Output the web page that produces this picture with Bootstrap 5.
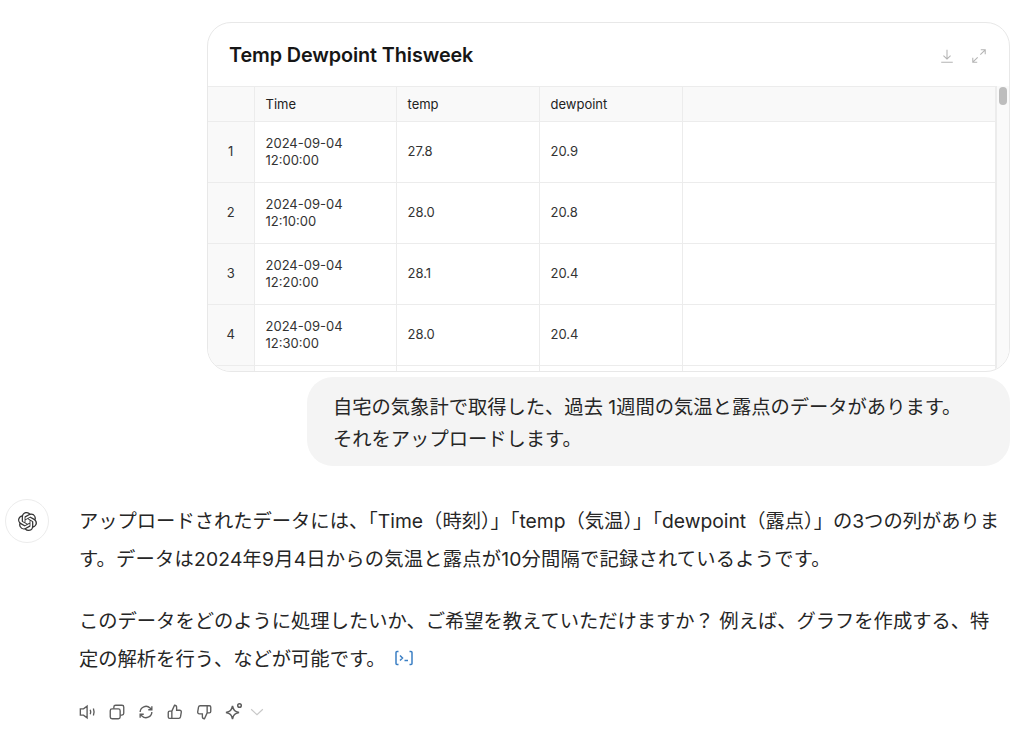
<!DOCTYPE html>
<html lang="ja">

<head>
  <meta charset="UTF-8" />
  <meta name="viewport" content="width=device-width, initial-scale=1.0" />
  <title>Temp Dewpoint Thisweek</title>
  <link href="https://cdn.jsdelivr.net/npm/bootstrap@5.3.3/dist/css/bootstrap.min.css" rel="stylesheet" />
  <style>
    html, body { height: 100%; overflow: hidden; }
    body { font-family: Inter, "Noto Sans CJK JP", sans-serif; color: #0d0d0d; background: #fff; }
    .chat-page { padding: 22px 14px 0 5px; }
    .file-card { width: 803px; height: 350px; border: 1px solid #e8e8e8; border-radius: 24px; overflow: hidden; }
    .file-head { height: 63px; padding: 2px 22px 0 21px; }
    .file-head h1 { font-size: 19.800px; font-weight: 600; color: #161616; margin: 0; letter-spacing: -.1px; }
    .file-head svg { width: 16px; height: 16px; }
    .table-wrap { height: 286px; overflow: hidden; }
    .data-table { width: 789px; table-layout: fixed; border-collapse: collapse; font-size: 13px; line-height: 17px; color: #333; }
    .data-table th, .data-table td { border: 1px solid #ececec; padding: 0 11px; font-weight: 400; vertical-align: middle; }
    .data-table tr > :first-child { border-left: 0; }
    .data-table thead th { height: 35px; background: #f9f9f9; color: #222; }
    .data-table tbody td { height: 61px; }
    .data-table tbody td:not(:nth-child(2)) { padding-bottom: 2px; }
    .data-table tbody td.row-no { background: #f9f9f9; text-align: center; padding: 0 0 2px; }
    .scroll-rail { width: 13px; background: #fafafa; border-left: 1px solid #ececec; }
    .scroll-thumb { width: 8px; height: 18px; margin: 1px 0 0 2px; background: #bdbdbd; border-radius: 4px; }
    .user-bubble { width: 703px; height: 89px; margin-top: 5px; padding: 14px 26px; background: #f4f4f4; border-radius: 26px; font-size: 19.300px; line-height: 32px; color: #262626; white-space: nowrap; }
    .reply-row { margin-top: 33px; }
    .bot-avatar { width: 44px; height: 44px; border: 1px solid #ececec; border-radius: 50%; flex: none; }
    .reply-body { width: 925px; margin-left: 30px; font-size: 19.300px; line-height: 38px; color: #262626; margin-top: 3px; white-space: nowrap; }
    .reply-body p { margin: 0 0 24px; }
    .wide-run { letter-spacing: .2px; }
    .code-link { vertical-align: -1px; margin-left: 8px; }
    .reply-tools { margin-top: 2px; gap: 11px; color: #5d5d5d; }
    .reply-tools svg { width: 18px; height: 18px; display: block; }
    .reply-tools .sparkle-icon { width: 20px; height: 20px; }
  </style>
</head>

<body>
  <div class="chat-page d-flex flex-column">
    <div class="d-flex flex-column align-items-end">
      <div class="file-card bg-white">
        <div class="file-head d-flex align-items-center justify-content-between">
          <h1>Temp Dewpoint Thisweek</h1>
          <div class="d-flex gap-3">
            <svg viewBox="0 0 18 18" fill="none" stroke="#b4b4b4" stroke-width="1.2"><path d="M9 2v10M5 8.500 9 12.500l4-4M2.500 16h13"/></svg>
            <svg viewBox="0 0 18 18" fill="none" stroke="#b4b4b4" stroke-width="1.2"><path d="M10.500 7.500 16 2M11 2h5v5M7.500 10.500 2 16M2 11v5h5"/></svg>
          </div>
        </div>
        <div class="table-wrap d-flex">
          <table class="data-table">
            <colgroup><col style="width:46px"><col style="width:142px"><col style="width:143px"><col style="width:143px"><col></colgroup>
            <thead>
              <tr><th></th><th>Time</th><th>temp</th><th>dewpoint</th><th></th></tr>
            </thead>
            <tbody>
              <tr><td class="row-no">1</td><td>2024-09-04<br>12:00:00</td><td>27.8</td><td>20.9</td><td></td></tr>
              <tr><td class="row-no">2</td><td>2024-09-04<br>12:10:00</td><td>28.0</td><td>20.8</td><td></td></tr>
              <tr><td class="row-no">3</td><td>2024-09-04<br>12:20:00</td><td>28.1</td><td>20.4</td><td></td></tr>
              <tr><td class="row-no">4</td><td>2024-09-04<br>12:30:00</td><td>28.0</td><td>20.4</td><td></td></tr>
              <tr><td class="row-no"></td><td></td><td></td><td></td><td></td></tr>
            </tbody>
          </table>
          <div class="scroll-rail"><div class="scroll-thumb"></div></div>
        </div>
      </div>
      <div class="user-bubble">自宅の気象計で取得した、過去 1週間の気温と露点のデータがあります。<br>それをアップロードします。</div>
    </div>

    <div class="reply-row d-flex align-items-start">
      <div class="bot-avatar d-flex align-items-center justify-content-center">
        <svg width="19" height="19" viewBox="0 0 24 24" fill="#333"><path d="M22.2819 9.8211a5.9847 5.9847 0 0 0-.5157-4.9108 6.0462 6.0462 0 0 0-6.5098-2.9A6.0651 6.0651 0 0 0 4.9807 4.1818a5.9847 5.9847 0 0 0-3.9977 2.9 6.0462 6.0462 0 0 0 .7427 7.0966 5.98 5.98 0 0 0 .511 4.9107 6.051 6.051 0 0 0 6.5146 2.9001A5.9847 5.9847 0 0 0 13.2599 24a6.0557 6.0557 0 0 0 5.7718-4.2058 5.9894 5.9894 0 0 0 3.9977-2.9001 6.0557 6.0557 0 0 0-.7475-7.0729zm-9.022 12.6081a4.4755 4.4755 0 0 1-2.8764-1.0408l.1419-.0804 4.7783-2.7582a.7948.7948 0 0 0 .3927-.6813v-6.7369l2.02 1.1686a.071.071 0 0 1 .038.052v5.5826a4.504 4.504 0 0 1-4.4945 4.4944zm-9.6607-4.1254a4.4708 4.4708 0 0 1-.5346-3.0137l.142.0852 4.783 2.7582a.7712.7712 0 0 0 .7806 0l5.8428-3.3685v2.3324a.0804.0804 0 0 1-.0332.0615L9.74 19.9502a4.4992 4.4992 0 0 1-6.1408-1.6464zM2.3408 7.8956a4.485 4.485 0 0 1 2.3655-1.9728V11.6a.7664.7664 0 0 0 .3879.6765l5.8144 3.3543-2.0201 1.1685a.0757.0757 0 0 1-.071 0l-4.8303-2.7865A4.504 4.504 0 0 1 2.3408 7.872zm16.5963 3.8558L13.1038 8.364 15.1192 7.2a.0757.0757 0 0 1 .071 0l4.8303 2.7913a4.4944 4.4944 0 0 1-.6765 8.1042v-5.6772a.79.79 0 0 0-.407-.667zm2.0107-3.0231l-.142-.0852-4.7735-2.7818a.7759.7759 0 0 0-.7854 0L9.409 9.2297V6.8974a.0662.0662 0 0 1 .0284-.0615l4.8303-2.7866a4.4992 4.4992 0 0 1 6.6802 4.66zM8.3065 12.863l-2.02-1.1638a.0804.0804 0 0 1-.038-.0567V6.0742a4.4992 4.4992 0 0 1 7.3757-3.4537l-.142.0805L8.704 5.459a.7948.7948 0 0 0-.3927.6813zm1.0976-2.3654l2.602-1.4998 2.6069 1.4998v2.9994l-2.5974 1.4997-2.6067-1.4997Z"/></svg>
      </div>
      <div class="reply-body">
        <p>アップロードされたデータには、「Time（時刻）」「temp（気温）」「dewpoint（露点）」の3つの列がありま<br><span class="wide-run">す。データは2024年9月4日からの気温と露点が10分間隔で記録されているようです。</span></p>
        <p>このデータをどのように処理したいか、ご希望を教えていただけますか？ 例えば、グラフを作成する、特<br>定の解析を行う、などが可能です。<svg class="code-link" width="20" height="18" viewBox="0 0 20 18" fill="none" stroke="#3b7fc4" stroke-width="1.500"><path d="M4.500 2.500H3a1 1 0 0 0-1 1v11a1 1 0 0 0 1 1h1.500M15.500 2.500H17a1 1 0 0 1 1 1v11a1 1 0 0 1-1 1h-1.500M6 6.500 8.500 9 6 11.500M10.500 11.500H14"/></svg></p>
        <div class="reply-tools d-flex align-items-center">
          <svg viewBox="0 0 20 20" fill="none" stroke="currentColor" stroke-width="1.500"><path d="M1.500 6.500h3.500l4-3v13l-4-3H1.500zM12.500 7.500c.7 1.600.7 3.400 0 5M16 6c1 2.600 1 5.400 0 8"/></svg>
          <svg viewBox="0 0 20 20" fill="none" stroke="currentColor" stroke-width="1.500"><rect x="2.500" y="6.500" width="11" height="11" rx="2"/><path d="M6.500 6.500V4.500a2 2 0 0 1 2-2h7a2 2 0 0 1 2 2v7a2 2 0 0 1-2 2h-2"/></svg>
          <svg viewBox="0 0 20 20" fill="none" stroke="currentColor" stroke-width="1.500"><path d="M3.500 10a6.500 6.500 0 0 1 11-4.500l2 2M16.500 3.500v4h-4M16.500 10a6.500 6.500 0 0 1-11 4.500l-2-2M3.500 16.500v-4h4"/></svg>
          <svg viewBox="0 0 20 20" fill="none" stroke="currentColor" stroke-width="1.500"><path d="M6.500 9v8H4a1.500 1.500 0 0 1-1.500-1.500v-5A1.500 1.500 0 0 1 4 9zM6.500 9l3-6.500c1.400 0 2.300 1 2.300 2.300V8h3.400c1.100 0 2 1 1.800 2.100l-.9 5.400c-.2 .9-.9 1.500-1.800 1.500H6.500"/></svg>
          <svg viewBox="0 0 20 20" fill="none" stroke="currentColor" stroke-width="1.500"><path d="M13.500 11V3H16a1.500 1.500 0 0 1 1.500 1.500v5A1.500 1.500 0 0 1 16 11zM13.500 11l-3 6.500c-1.400 0-2.300-1-2.300-2.300V12H4.800C3.700 12 2.800 11 3 9.900l.9-5.400C4.100 3.600 4.800 3 5.700 3h7.800"/></svg>
          <div class="d-flex align-items-center gap-1">
            <svg class="sparkle-icon" viewBox="0 0 20 20" fill="none" stroke="currentColor" stroke-width="1.500"><path d="M8.500 4c.9 4.200 2.300 5.600 6.500 6.500-4.200.9-5.600 2.300-6.500 6.500-.9-4.200-2.300-5.600-6.500-6.500C6.200 9.600 7.600 8.200 8.500 4z"/><circle cx="15.500" cy="3.500" r="1.800"/></svg>
            <svg viewBox="0 0 20 20" fill="none" stroke="#c8c8c8" stroke-width="1.300"><path d="M3.500 7 10 13l6.500-6"/></svg>
          </div>
        </div>
      </div>
    </div>
  </div>
  <script src="https://cdn.jsdelivr.net/npm/bootstrap@5.3.3/dist/js/bootstrap.bundle.min.js"></script>
</body>

</html>
